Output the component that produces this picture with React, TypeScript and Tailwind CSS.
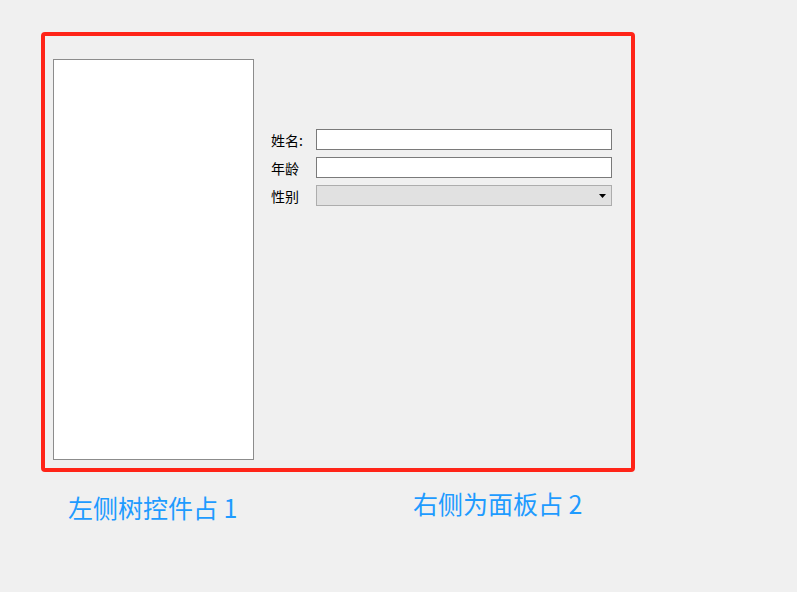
import React from 'react';

const Field = ({ label, children }: { label: string; children: React.ReactNode }) => (
  <div className="flex items-center h-[21px]">
    <div className="w-[45px] text-[14px] leading-none text-black">{label}</div>
    {children}
  </div>
);

const App = () => {
  return (
    <div
      className="w-[797px] h-[592px] bg-[#f0f0f0] overflow-hidden pt-[32px] pl-[41px]"
      style={{ fontFamily: '"Noto Sans CJK SC", "Noto Sans", sans-serif' }}
    >
      <div className="w-[594px] h-[440px] border-4 border-[#ff2418] rounded-[4px] flex pt-[23px] pl-[8px]">
        <div className="w-[201px] h-[401px] bg-white border border-[#8c8c8c]" />
        <div className="flex-1 pl-[17px] pr-[19px] pt-[70px] flex flex-col gap-[7px]">
          <Field label="姓名:">
            <div className="flex-1 h-[21px] bg-white border border-[#7a7a7a]" />
          </Field>
          <Field label="年龄">
            <div className="flex-1 h-[21px] bg-white border border-[#7a7a7a]" />
          </Field>
          <Field label="性别">
            <div className="flex-1 h-[21px] bg-[#e1e1e1] border border-[#adadad] flex items-center justify-end pr-[5px]">
              <svg width="7" height="4" viewBox="0 0 7 4">
                <path d="M0 0h7L3.5 4z" fill="#000" />
              </svg>
            </div>
          </Field>
        </div>
      </div>
      <div className="flex text-[25px] leading-none text-[#1e9bff] mt-[19px]">
        <div className="pl-[27px] pt-[4px] w-[372px]">左侧树控件占 1</div>
        <div>右侧为面板占 2</div>
      </div>
    </div>
  );
};

export default App;
